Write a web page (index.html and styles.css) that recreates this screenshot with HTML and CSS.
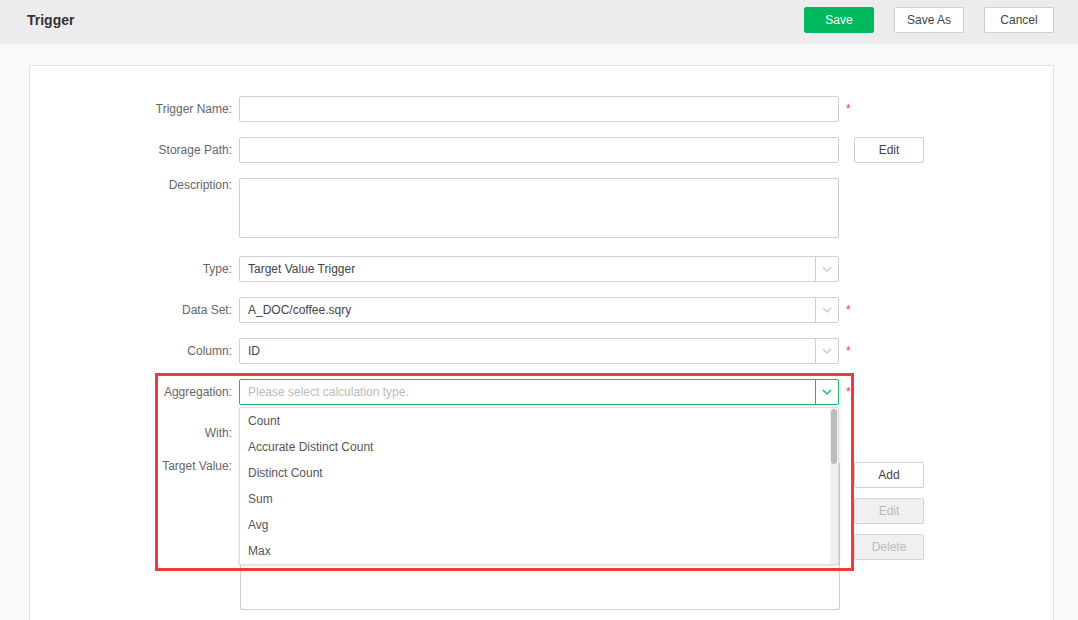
FILE: index.html
```html
<!DOCTYPE html>
<html lang="en">
<head>
<meta charset="utf-8">
<title>Trigger</title>
<link rel="stylesheet" href="styles.css">
</head>
<body>
<header class="topbar">
  <div class="title">Trigger</div>
  <div class="actions">
    <button class="btn btn-primary">Save</button>
    <button class="btn">Save As</button>
    <button class="btn">Cancel</button>
  </div>
</header>
<main class="page">
  <section class="card">
    <form class="form">
      <div class="row">
        <label class="label">Trigger Name:</label>
        <div class="input"></div>
        <span class="req">*</span>
      </div>
      <div class="row">
        <label class="label">Storage Path:</label>
        <div class="input"></div>
        <button type="button" class="btn side-btn">Edit</button>
      </div>
      <div class="row row-desc">
        <label class="label">Description:</label>
        <div class="input textarea"></div>
      </div>
      <div class="row">
        <label class="label">Type:</label>
        <div class="select">
          <span class="value">Target Value Trigger</span>
          <span class="arrow"><svg width="10" height="6" viewBox="0 0 10 6"><polyline points="1,1 5,5 9,1" fill="none" stroke="#c8c8c8" stroke-width="1.3"/></svg></span>
        </div>
      </div>
      <div class="row">
        <label class="label">Data Set:</label>
        <div class="select">
          <span class="value">A_DOC/coffee.sqry</span>
          <span class="arrow"><svg width="10" height="6" viewBox="0 0 10 6"><polyline points="1,1 5,5 9,1" fill="none" stroke="#c8c8c8" stroke-width="1.3"/></svg></span>
        </div>
        <span class="req">*</span>
      </div>
      <div class="row">
        <label class="label">Column:</label>
        <div class="select">
          <span class="value">ID</span>
          <span class="arrow"><svg width="10" height="6" viewBox="0 0 10 6"><polyline points="1,1 5,5 9,1" fill="none" stroke="#c8c8c8" stroke-width="1.3"/></svg></span>
        </div>
        <span class="req">*</span>
      </div>
      <div class="row row-agg">
        <label class="label">Aggregation:</label>
        <div class="select select-active">
          <span class="value placeholder">Please select calculation type.</span>
          <span class="arrow"><svg width="10" height="6" viewBox="0 0 10 6"><polyline points="1,1 5,5 9,1" fill="none" stroke="#1db866" stroke-width="1.5"/></svg></span>
          <ul class="dropdown">
            <li>Count</li>
            <li>Accurate Distinct Count</li>
            <li>Distinct Count</li>
            <li>Sum</li>
            <li>Avg</li>
            <li>Max</li>
            <li class="scrollbar"><span class="thumb"></span></li>
          </ul>
        </div>
        <span class="req">*</span>
        <div class="highlight"></div>
      </div>
      <div class="row row-with">
        <label class="label">With:</label>
        <div class="input plain"></div>
      </div>
      <div class="row row-target">
        <label class="label label-target">Target Value:</label>
        <div class="input listbox"></div>
        <div class="btn-col">
          <button type="button" class="btn side">Add</button>
          <button type="button" class="btn side disabled">Edit</button>
          <button type="button" class="btn side disabled">Delete</button>
        </div>
      </div>
    </form>
  </section>
</main>
</body>
</html>
```

FILE: styles.css
```css
* { box-sizing: border-box; }
html, body {
  margin: 0;
  padding: 0;
  height: 100%;
  overflow: hidden;
}
body {
  background: #f8f9fb;
  font-family: "Liberation Sans", Arial, sans-serif;
  font-size: 12px;
  color: #333;
}
.topbar {
  height: 44px;
  background: #ececee;
  display: flex;
  align-items: flex-start;
  justify-content: space-between;
  padding: 7px 24px 0 27px;
}
.title {
  font-size: 14px;
  font-weight: bold;
  color: #333;
  line-height: 26px;
}
.actions {
  display: flex;
  gap: 20px;
}
.btn {
  width: 70px;
  height: 26px;
  border: 1px solid #cfcfcf;
  border-radius: 2px;
  background: #fff;
  color: #444;
  font-family: "Liberation Sans", Arial, sans-serif;
  font-size: 12px;
  padding: 0;
  line-height: 24px;
  text-align: center;
  cursor: pointer;
}
.btn-primary {
  background: #00b95f;
  border-color: #00b95f;
  color: #fff;
}
.page {
  padding: 21px 24px 0 29px;
}
.card {
  background: #fff;
  border: 1px solid #e3e3e3;
  height: 556px;
  overflow: hidden;
  padding: 30px 0 0 92px;
}
.form {
  display: flex;
  flex-direction: column;
}
.row {
  display: flex;
  align-items: flex-start;
  margin-bottom: 15px;
  position: relative;
}
.row-desc { margin-bottom: 18px; }
.label {
  width: 110px;
  margin-right: 7px;
  text-align: right;
  line-height: 26px;
  color: #666;
  white-space: nowrap;
}
.row-desc .label { line-height: 14px; }
.input {
  width: 600px;
  height: 26px;
  border: 1px solid #cfcfcf;
  border-radius: 2px;
  background: #fff;
}
.textarea { height: 60px; }
.req {
  color: #f33;
  font-size: 12px;
  margin-left: 7px;
  line-height: 26px;
}
.side-btn { margin-left: 15px; }
.select {
  position: relative;
  width: 600px;
  height: 26px;
  border: 1px solid #cfcfcf;
  border-radius: 2px;
  background: #fff;
  display: flex;
  align-items: stretch;
}
.select .value {
  flex: 1;
  padding-left: 8px;
  line-height: 24px;
  color: #444;
}
.select .placeholder { color: #bbb; }
.select .arrow {
  width: 23px;
  border-left: 1px solid #cfcfcf;
  display: flex;
  align-items: center;
  justify-content: center;
}
.select-active { border-color: #1db866; }
.select-active .arrow { border-left-color: #1db866; }
.dropdown {
  position: absolute;
  top: 27px;
  left: -1px;
  width: 600px;
  height: 158px;
  margin: 0;
  padding: 0;
  list-style: none;
  background: #fff;
  border: 1px solid #dcdcdc;
  box-shadow: 0 1px 3px rgba(0,0,0,0.12);
  z-index: 5;
  overflow: hidden;
}
.dropdown li {
  height: 26px;
  line-height: 26px;
  padding-left: 8px;
  color: #555;
}
.dropdown li.scrollbar {
  position: absolute;
  top: 0;
  right: 0;
  width: 8px;
  height: 156px;
  padding: 0;
  background: #f0f0f0;
}
.dropdown .thumb {
  position: absolute;
  top: 1px;
  left: 1px;
  width: 6px;
  height: 55px;
  border-radius: 3px;
  background: #bdbdbd;
}
.highlight {
  position: absolute;
  top: -6px;
  left: 33px;
  width: 699px;
  height: 198px;
  border: 3px solid #f23a3a;
  z-index: 6;
  pointer-events: none;
}
.row-with { margin-bottom: 10px; }
.label-target { line-height: 20px; }
.listbox {
  margin-top: 6px;
  margin-left: 1px;
  height: 148px;
}
.btn-col {
  margin-top: 6px;
  margin-left: 14px;
  display: flex;
  flex-direction: column;
  gap: 10px;
}
.btn.disabled {
  background: #f0f0f0;
  color: #bbb;
  border-color: #d4d4d4;
}
```
